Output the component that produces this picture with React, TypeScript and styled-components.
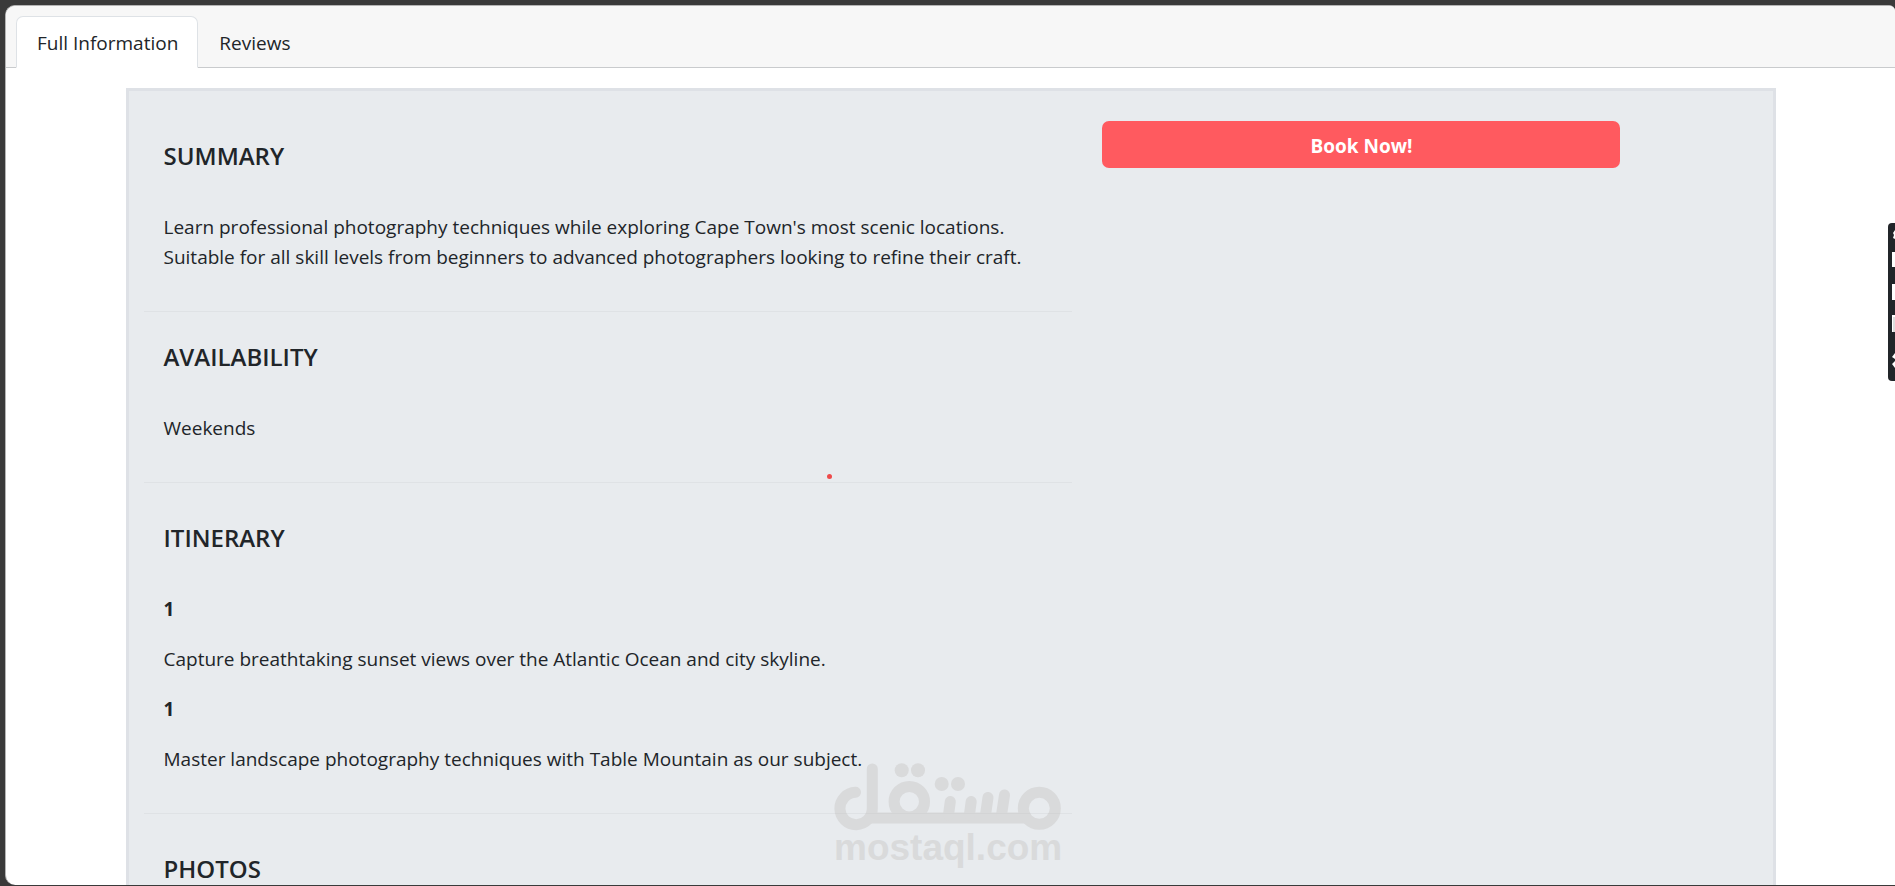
import React, { useState } from "react";
import styled, { createGlobalStyle } from "styled-components";

const GlobalStyle = createGlobalStyle`
  *, *::before, *::after { box-sizing: border-box; }
  body {
    margin: 0;
    background: #3a3a3a;
    color: #212529;
    font-family: "Open Sans", "Noto Sans", sans-serif;
    font-size: 19px;
    line-height: 30px;
  }
`;

const Frame = styled.div`
  position: relative;
  height: 100vh;
  padding: 5px 0 1px 5px;
  overflow: hidden;
`;

const Card = styled.main`
  height: 100%;
  overflow: hidden;
  background: #fff;
  border: 1px solid #b4b4b4;
  border-width: 1px 0 0 1px;
  border-radius: 10px 6px 0 10px;
`;

const TabBar = styled.div`
  display: flex;
  padding: 10px 10px 0;
  background: #f7f7f7;
  border-bottom: 1px solid #c9cbcd;
`;

const Tab = styled.button<{ $active: boolean }>`
  margin-bottom: -1px;
  padding: 11px 19px 9px 20px;
  border: 1px solid ${(p) => (p.$active ? "#dee2e6" : "transparent")};
  border-bottom-color: ${(p) => (p.$active ? "#fff" : "transparent")};
  border-radius: 7px 7px 0 0;
  background: ${(p) => (p.$active ? "#fff" : "transparent")};
  color: inherit;
  font: inherit;
  cursor: pointer;
`;

const Panel = styled.div`
  display: flex;
  align-items: flex-start;
  max-width: 1650px;
  margin: 20px auto 0;
  background: #e8ebee;
  border: 3px solid #dee1e6;
`;

const Details = styled.div`
  flex: 0 0 58.3333%;
  padding: 10px 15px;
`;

const Booking = styled.aside`
  flex: 0 0 33.3333%;
  padding: 30px 15px;
`;

const Section = styled.section`
  padding: 40px 20px 39px;
  border-bottom: 1px solid #dfe2e5;
`;

const CompactSection = styled(Section)`
  padding-top: 30px;
`;

const Heading = styled.h2`
  margin: 0 0 41px;
  font-size: 24px;
  font-weight: 600;
  line-height: 30px;
`;

const Text = styled.p`
  margin: 0;
`;

const Steps = styled.dl`
  display: grid;
  gap: 20px;
  margin: 0;
`;

const StepNumber = styled.dt`
  font-weight: 700;
`;

const StepText = styled.dd`
  margin: 0;
`;

const BookButton = styled.button`
  width: 100%;
  height: 47px;
  padding: 2px 0 0;
  border: 0;
  border-radius: 7px;
  background: #ff5a5f;
  color: #fff;
  font: inherit;
  font-weight: 700;
  cursor: pointer;
`;

const Marker = styled.span`
  position: absolute;
  top: 474px;
  left: 827px;
  width: 5px;
  height: 5px;
  border-radius: 50%;
  background: #ee4a4a;
`;

const Watermark = styled.div`
  position: absolute;
  top: 763px;
  left: 834px;
  width: 227px;
  color: #c2bfbd;
  opacity: 0.38;
  pointer-events: none;

  svg { display: block; overflow: visible; }
`;

const WatermarkName = styled.div`
  font: 700 37px/36px "Liberation Sans", Arial, sans-serif;
`;

const SideTools = styled.div`
  position: absolute;
  top: 223px;
  right: 0;
  width: 7px;
  height: 158px;
  overflow: hidden;
  background: #212529;
  border-radius: 4px 0 0 4px;

  svg { display: block; }
`;

const tabs = ["Full Information", "Reviews"];

const steps = [
  "Capture breathtaking sunset views over the Atlantic Ocean and city skyline.",
  "Master landscape photography techniques with Table Mountain as our subject.",
];

export default function App() {
  const [active, setActive] = useState(tabs[0]);
  return (
    <>
      <GlobalStyle />
      <Frame>
        <Card>
          <TabBar role="tablist">
            {tabs.map((tab) => (
              <Tab
                key={tab}
                role="tab"
                aria-selected={tab === active}
                $active={tab === active}
                onClick={() => setActive(tab)}
              >
                {tab}
              </Tab>
            ))}
          </TabBar>
          <Panel>
            <Details>
              <Section>
                <Heading>SUMMARY</Heading>
                <Text>
                  Learn professional photography techniques while exploring Cape Town's most scenic locations.
                  <br />
                  Suitable for all skill levels from beginners to advanced photographers looking to refine their craft.
                </Text>
              </Section>
              <CompactSection>
                <Heading>AVAILABILITY</Heading>
                <Text>Weekends</Text>
              </CompactSection>
              <Section>
                <Heading>ITINERARY</Heading>
                <Steps>
                  {steps.map((step) => (
                    <React.Fragment key={step}>
                      <StepNumber>1</StepNumber>
                      <StepText>{step}</StepText>
                    </React.Fragment>
                  ))}
                </Steps>
              </Section>
              <Section>
                <Heading>PHOTOS</Heading>
              </Section>
            </Details>
            <Booking>
              <BookButton>Book Now!</BookButton>
            </Booking>
          </Panel>
        </Card>
        <Marker />
        <Watermark aria-hidden="true">
          <svg width="227" height="67" viewBox="0 0 227 67" fill="none" stroke="currentColor" strokeWidth="11" strokeLinecap="round">
            <path d="M38.3 6V45.3A16.2 16.2 0 1 1 21.5 29.3" />
            <path d="M33 55H196" strokeLinecap="butt" />
            <circle cx="75.3" cy="38.7" r="15.2" />
            <circle cx="205.3" cy="45.3" r="16" />
            <path d="M116.3 38.5L114.5 52M137.2 38.5L135.4 52M154 34.5L151.5 52M170.5 32L167.5 52" />
            <g fill="currentColor" stroke="none">
              <circle cx="67.7" cy="7.3" r="7" />
              <circle cx="84" cy="7.3" r="7" />
              <circle cx="107.7" cy="21" r="7" />
              <circle cx="124" cy="21" r="7" />
            </g>
          </svg>
          <WatermarkName>mostaql.com</WatermarkName>
        </Watermark>
        <SideTools>
          <svg width="7" height="158" viewBox="0 0 7 158" fill="#fff">
            <path d="M7 7L5 10L6 12L5 15L7 16Z" />
            <path d="M4 29H7V44H4ZM4 61H7V77H4ZM4 92H7V109H4Z" />
            <path d="M6 109V94" stroke="#bbb" />
            <path d="M7 130L4 134L7 136ZM7 138L4 141L7 145Z" />
          </svg>
        </SideTools>
      </Frame>
    </>
  );
}
